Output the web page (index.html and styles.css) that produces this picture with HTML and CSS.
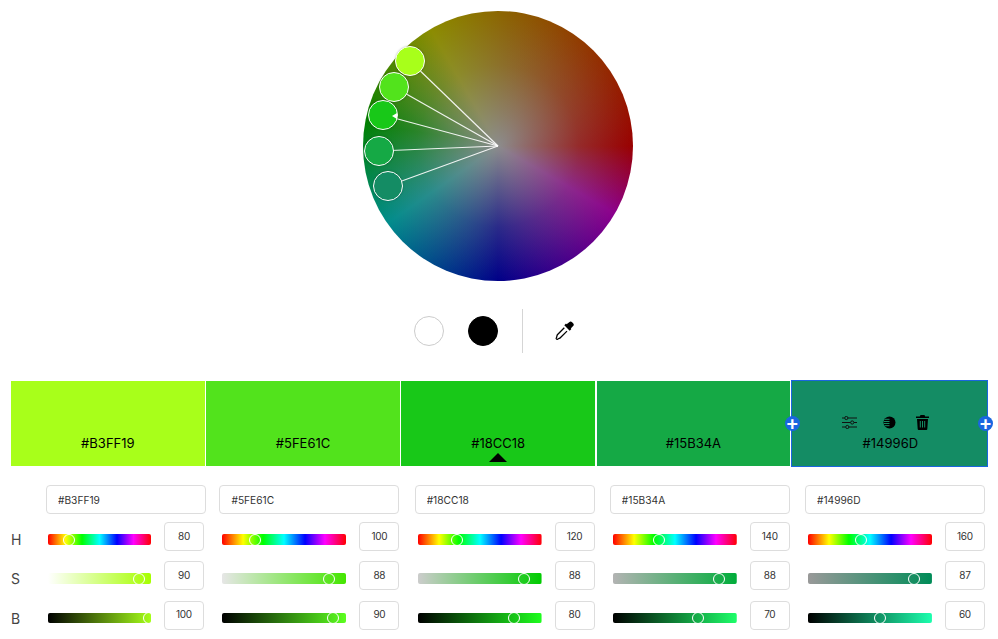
FILE: index.html
```html
<!DOCTYPE html>
<html lang="en">
<head>
    <meta charset="UTF-8">
    <meta name="viewport" content="width=device-width, initial-scale=1.0">
    <title>Color Wheel</title>
    <link rel="stylesheet" href="styles.css">
</head>
<body>
    <div class="wheel-area">
        <div class="wheel">
            <svg class="wheel-lines" width="270" height="270" viewBox="0 0 270 270">
                <line x1="135" y1="135" x2="47" y2="50"/>
                <line x1="135" y1="135" x2="31" y2="76"/>
                <line x1="135" y1="135" x2="20" y2="104"/>
                <line x1="135" y1="135" x2="16" y2="140"/>
                <line x1="135" y1="135" x2="25" y2="175"/>
            </svg>
            <span class="handle handle-1"></span>
            <span class="handle handle-2"></span>
            <span class="handle handle-3"></span>
            <span class="handle handle-4"></span>
            <span class="handle handle-5"></span>
            <span class="base-mark"></span>
        </div>
    </div>

    <div class="tools">
        <button class="dot dot-white"></button>
        <button class="dot dot-black"></button>
        <span class="divider"></span>
        <svg class="dropper" width="20" height="20" viewBox="0 0 20 20">
            <path d="M14.2 1.3a2 2 0 0 1 2.9 0l1 1a2 2 0 0 1 0 2.8l-2.300 2.300.6.6-1.700 1.700-5.400-5.400 1.700-1.700.6.6z" fill="#000"/>
            <path d="M9.300 6.800 2.600 13.500c-.5.500-.6 1-.7 1.600l-.3 1.200c-.1.400-.5.700-.4 1.200.2.600.9 1 1.400.7l1.200-.7c.5-.2 1.100-.3 1.500-.7l6.700-6.700" fill="#fff" stroke="#000" stroke-width="1.300"/>
        </svg>
    </div>

    <div class="swatches">
        <div class="swatch swatch-1"><span class="hex">#B3FF19</span></div>
        <div class="swatch swatch-2"><span class="hex">#5FE61C</span></div>
        <div class="swatch swatch-3"><span class="hex">#18CC18</span><span class="base-arrow"></span></div>
        <div class="swatch swatch-4"><span class="hex">#15B34A</span></div>
        <div class="swatch swatch-5 selected">
            <div class="swatch-icons">
                <svg class="icon-sliders" width="15" height="13" viewBox="0 0 15 13" fill="none" stroke="#111" stroke-width="1">
                    <path d="M0 2h2.500M6 2h9M0 6.500h8.500M12 6.500h3M0 11h3.500M7 11h8"/>
                    <circle cx="4.300" cy="2" r="1.600"/><circle cx="10.200" cy="6.500" r="1.600"/><circle cx="5.300" cy="11" r="1.600"/>
                </svg>
                <svg width="13" height="13" viewBox="0 0 13 13">
                    <circle cx="6.500" cy="6.500" r="6" fill="#000"/>
                    <path d="M1.500 3.300h5M1 5.500h5.500M1 7.500h5.500M1.500 9.700h5" stroke="#148C64" stroke-width="1" fill="none"/>
                </svg>
                <svg width="13" height="15" viewBox="0 0 13 15">
                    <path d="M4.500 0h4l.7 1.500H13V3H0V1.500h3.800z" fill="#000"/>
                    <path d="M1 4h11l-.7 10a1 1 0 0 1-1 1H2.700a1 1 0 0 1-1-1z" fill="#000"/>
                    <path d="M4.300 6v6.500M6.500 6v6.500M8.700 6v6.500" stroke="#148C64" stroke-width="1"/>
                </svg>
            </div>
            <span class="hex">#14996D</span>
            <span class="add add-left">+</span>
            <span class="add add-right">+</span>
        </div>
    </div>

    <div class="editors">
        <div class="editor editor-first">
            <input class="hex-input" value="#B3FF19">
            <div class="row">
                <span class="row-label">H</span>
                <div class="track track-hue"><span class="thumb" style="left: 20%"></span></div>
                <input class="num" value="80">
            </div>
            <div class="row">
                <span class="row-label">S</span>
                <div class="track" style="background: linear-gradient(to right, #fff, #a6ff00)"><span class="thumb" style="left: 88%"></span></div>
                <input class="num" value="90">
            </div>
            <div class="row">
                <span class="row-label">B</span>
                <div class="track track-short" style="background: linear-gradient(to right, #000, #a6ff19)"><span class="thumb" style="left: 98%"></span></div>
                <input class="num" value="100">
            </div>
        </div>

        <div class="editor">
            <input class="hex-input" value="#5FE61C">
            <div class="row">
                <div class="track track-hue"><span class="thumb" style="left: 26%"></span></div>
                <input class="num" value="100">
            </div>
            <div class="row">
                <div class="track" style="background: linear-gradient(to right, #e6e6e6, #44e600)"><span class="thumb" style="left: 86%"></span></div>
                <input class="num" value="88">
            </div>
            <div class="row">
                <div class="track track-short" style="background: linear-gradient(to right, #000, #5cff1f)"><span class="thumb" style="left: 89%"></span></div>
                <input class="num" value="90">
            </div>
        </div>

        <div class="editor">
            <input class="hex-input" value="#18CC18">
            <div class="row">
                <div class="track track-hue"><span class="thumb" style="left: 32%"></span></div>
                <input class="num" value="120">
            </div>
            <div class="row">
                <div class="track" style="background: linear-gradient(to right, #ccc, #00cc00)"><span class="thumb" style="left: 86%"></span></div>
                <input class="num" value="88">
            </div>
            <div class="row">
                <div class="track track-short" style="background: linear-gradient(to right, #000, #1eff1e)"><span class="thumb" style="left: 78%"></span></div>
                <input class="num" value="80">
            </div>
        </div>

        <div class="editor">
            <input class="hex-input" value="#15B34A">
            <div class="row">
                <div class="track track-hue"><span class="thumb" style="left: 37%"></span></div>
                <input class="num" value="140">
            </div>
            <div class="row">
                <div class="track" style="background: linear-gradient(to right, #b3b3b3, #00ad3a)"><span class="thumb" style="left: 86%"></span></div>
                <input class="num" value="88">
            </div>
            <div class="row">
                <div class="track track-short" style="background: linear-gradient(to right, #000, #1eff6a)"><span class="thumb" style="left: 68.500%"></span></div>
                <input class="num" value="70">
            </div>
        </div>

        <div class="editor">
            <input class="hex-input" value="#14996D">
            <div class="row">
                <div class="track track-hue"><span class="thumb" style="left: 43%"></span></div>
                <input class="num" value="160">
            </div>
            <div class="row">
                <div class="track" style="background: linear-gradient(to right, #999, #008c58)"><span class="thumb" style="left: 85.500%"></span></div>
                <input class="num" value="87">
            </div>
            <div class="row">
                <div class="track track-short" style="background: linear-gradient(to right, #000, #1cffae)"><span class="thumb" style="left: 58%"></span></div>
                <input class="num" value="60">
            </div>
        </div>
    </div>
</body>
</html>
```

FILE: styles.css
```css
* {
    box-sizing: border-box;
}
html, body {
    margin: 0;
    height: 639px;
    overflow: hidden;
}
body {
    background: #fff;
    padding: 11px 11px 0;
    font-family: Inter, "Liberation Sans", sans-serif;
    color: #333;
}

/* wheel */
.wheel-area {
    display: flex;
    justify-content: center;
    padding-right: 2px;
}
.wheel {
    position: relative;
    width: 270px;
    height: 270px;
    border-radius: 50%;
    background:
        radial-gradient(circle closest-side, #8c8c8c 0, rgba(140, 140, 140, 0.7) 25%, rgba(140, 140, 140, 0.3) 60%, rgba(140, 140, 140, 0) 100%),
        conic-gradient(from 90deg, #990000 0deg, #8c008c 30deg, #000088 90deg, #008c8c 145deg, #008000 190deg, #8c8c00 240deg, #8c6000 275deg, #990000 360deg);
}
.wheel-lines {
    position: absolute;
    top: 0;
    left: 0;
}
.wheel-lines line {
    stroke: #fff;
    stroke-width: 1.200;
    opacity: 0.9;
}
.handle {
    position: absolute;
    width: 30px;
    height: 30px;
    border: 1px solid #fff;
    border-radius: 50%;
    box-shadow: 0 0 2px rgba(0, 0, 0, 0.25);
}
.handle-1 { left: 32px; top: 35px; background: #a8ff1a; }
.handle-2 { left: 16px; top: 61px; background: #52e31c; }
.handle-3 { left: 5px; top: 89px; background: #18c818; }
.handle-4 { left: 1px; top: 125px; background: #15a945; }
.handle-5 { left: 10px; top: 160px; background: #148c64; }
.base-mark {
    position: absolute;
    left: 29px;
    top: 102px;
    border-top: 3px solid transparent;
    border-bottom: 3px solid transparent;
    border-right: 5px solid #fff;
}

/* white / black / dropper */
.tools {
    display: flex;
    align-items: center;
    justify-content: center;
    height: 44px;
    margin-top: 28px;
    padding-right: 10px;
}
.dot {
    width: 30px;
    height: 30px;
    padding: 0;
    border-radius: 50%;
    border: 1px solid #ccc;
    background: #fff;
    margin-right: 24px;
}
.dot-black {
    background: #000;
    border-color: #000;
}
.divider {
    width: 1px;
    height: 44px;
    background: #d5d5d5;
    margin: 0 32px 0 0;
}
.dropper {
    display: block;
}

/* swatches */
.swatches {
    display: flex;
    height: 85px;
    margin-top: 28px;
    width: 976px;
}
.swatch {
    position: relative;
    flex: none;
    width: calc(20% - 1.500px);
    margin-right: 1.500px;
    display: flex;
    flex-direction: column;
    align-items: center;
    justify-content: flex-end;
    padding-bottom: 15px;
    color: #000;
    font-size: 13px;
}
.hex {
    line-height: 16px;
}
.swatch-1 { background: #a8ff1a; }
.swatch-2 { background: #52e31c; }
.swatch-3 { background: #18c818; }
.swatch-4 { background: #15a945; }
.swatch-5 { background: #148c64; }
.selected {
    width: 20%;
    margin-right: 0;
    padding-left: 2px;
    outline: 1px solid #1a66e0;
}
.swatch-icons {
    display: flex;
    align-items: center;
    gap: 20px;
    margin-bottom: 5px;
    margin-right: 10px;
}
.swatch-icons svg {
    display: block;
}
.swatch-icons .icon-sliders {
    margin-right: 6px;
}
.base-arrow {
    position: absolute;
    left: 50%;
    bottom: 4px;
    margin-left: -9px;
    border-left: 9px solid transparent;
    border-right: 9px solid transparent;
    border-bottom: 9px solid #000;
}
.add {
    position: absolute;
    top: 35px;
    width: 15px;
    height: 15px;
    border-radius: 50%;
    background: #1a66e0;
    color: #fff;
    font-size: 20px;
    font-weight: 600;
    line-height: 14px;
    text-align: center;
}
.add-left { left: -7px; }
.add-right { right: -6px; }

/* editors */
.editors {
    display: flex;
    width: 976px;
    margin-top: 19px;
}
.editor {
    flex: 0 0 20%;
    min-width: 0;
    display: flex;
    flex-direction: column;
    padding: 0 2px 0 13.250px;
}
.editor-first {
    padding: 0;
}
.editor-first .hex-input {
    margin-left: 35px;
    width: 160px;
}
.editor-first .row {
    margin-right: 2.200px;
}
.hex-input {
    width: 100%;
    height: 29px;
    padding: 0 11px;
    margin-bottom: 8px;
    border: 1px solid #ddd;
    border-radius: 4px;
    font: 10.200px Inter, "Liberation Sans", sans-serif;
    color: #333;
    outline: none;
}
.row {
    display: flex;
    align-items: flex-start;
    height: 29px;
    margin-bottom: 10.300px;
}
.row-label {
    width: 37px;
    flex: none;
    margin-top: 9px;
    font-size: 14px;
    line-height: 17px;
    color: #444;
}
.track {
    position: relative;
    flex: 1;
    min-width: 0;
    height: 11px;
    margin: 12px 13px 0 3px;
    border-radius: 2px;
    clip-path: inset(-4px 0 -4px -4px);
}
.editor-first .track {
    margin-left: 0;
}
.track-short {
    height: 10px;
}
.track-hue {
    background: linear-gradient(to right, #f00 0%, #ff0 17%, #0f0 33%, #0ff 50%, #00f 67%, #f0f 83%, #f00 100%);
}
.thumb {
    position: absolute;
    top: 50%;
    width: 12px;
    height: 12px;
    margin: -6px 0 0 -6px;
    border: 1px solid #fff;
    border-radius: 50%;
}
.num {
    width: 40px;
    flex: none;
    height: 29px;
    padding: 0 0 2px;
    border: 1px solid #ddd;
    border-radius: 4px;
    text-align: center;
    font: 10px Inter, "Liberation Sans", sans-serif;
    letter-spacing: -0.3px;
    color: #333;
    outline: none;
}
```
